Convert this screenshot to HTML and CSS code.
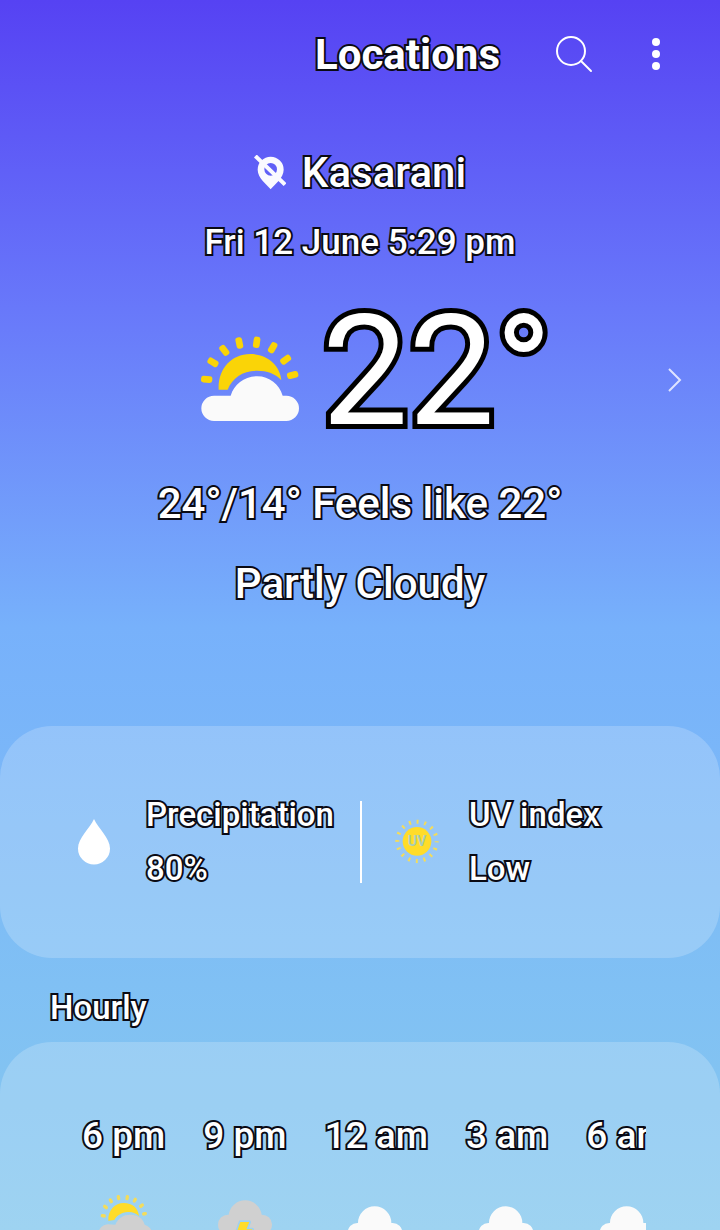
FILE: index.html
```html
<!DOCTYPE html>
<html lang="en">
<head>
  <meta charset="UTF-8">
  <meta name="viewport" content="width=device-width, initial-scale=1">
  <title>Weather</title>
  <link rel="stylesheet" href="styles.css">
</head>
<body>
  <div class="screen">

    <header class="top-bar">
      <h1>Locations</h1>
      <button class="icon-button" aria-label="Search">
        <svg width="40" height="40" viewBox="0 0 40 40" fill="none" stroke="#fff" stroke-width="2" stroke-linecap="round">
          <circle cx="17" cy="17" r="14"/>
          <path d="M27 27L37 37"/>
        </svg>
      </button>
      <button class="icon-button" aria-label="More options">
        <svg width="40" height="40" viewBox="0 0 40 40" fill="#fff">
          <circle cx="20" cy="8" r="4"/>
          <circle cx="20" cy="20" r="4"/>
          <circle cx="20" cy="32" r="4"/>
        </svg>
      </button>
    </header>

    <main>
      <section class="current">
        <h2 class="city">
          <svg width="32" height="36" viewBox="193 41 96 108">
            <path fill="#fafaff" fill-rule="evenodd" d="M243 144C232 130 204 110 204 85a39 39 0 0 1 78 0C282 110 254 130 243 144ZM243 65a19 19 0 1 0 0 38a19 19 0 1 0 0-38Z"/>
            <path fill="none" stroke="#fafaff" stroke-width="12" d="M197 44L286 130"/>
          </svg>
          Kasarani
        </h2>
        <p class="date">Fri 12 June 5:29 pm</p>

        <div class="now">
          <div class="reading">
            <svg width="100" height="88" viewBox="39 137 300 264">
              <g fill="#fad407">
                <rect x="-10" y="-17" width="20" height="34" rx="8" transform="translate(59 267) rotate(-85)"/>
                <rect x="-10" y="-17" width="20" height="34" rx="8" transform="translate(78 216) rotate(-58)"/>
                <rect x="-10" y="-17" width="20" height="34" rx="8" transform="translate(112 180) rotate(-38)"/>
                <rect x="-10" y="-17" width="20" height="34" rx="8" transform="translate(157 158) rotate(-12)"/>
                <rect x="-10" y="-17" width="20" height="34" rx="8" transform="translate(209 156) rotate(8)"/>
                <rect x="-10" y="-17" width="20" height="34" rx="8" transform="translate(257 172) rotate(30)"/>
                <rect x="-10" y="-17" width="20" height="34" rx="8" transform="translate(296 208) rotate(54)"/>
                <rect x="-10" y="-17" width="20" height="34" rx="8" transform="translate(317 254) rotate(76)"/>
                <path d="M95 298C92 240 130 191 190 191C240 191 280 225 283 270C266 250 240 241 210 241C168 241 136 262 122 298Z"/>
              </g>
              <path fill="#fafafa" d="M81 392a38 38 0 0 1 0-76h50C142 282 172 258 211 258C247 258 277 282 287 316h11a38 38 0 0 1 0 76Z"/>
            </svg>
            <span class="temp">22°</span>
          </div>
          <button class="next" aria-label="Next location">
            <svg width="14" height="26" viewBox="0 0 14 26" fill="none" stroke="#dfe4ff" stroke-width="2">
              <path d="M1 2L12 13L1 24"/>
            </svg>
          </button>
        </div>

        <p class="summary">24°/14° Feels like 22°</p>
        <p class="summary">Partly Cloudy</p>
      </section>

      <section class="card details">
        <div class="detail">
          <svg width="44" height="46" viewBox="0 0 44 46">
            <path fill="#fff" d="M22 0C26 9 38 19 38 29.500a16 16 0 0 1-32 0C6 19 18 9 22 0Z"/>
          </svg>
          <dl>
            <dt>Precipitation</dt>
            <dd>80%</dd>
          </dl>
        </div>
        <div class="detail">
          <svg width="44" height="46" viewBox="0 0 132 138">
            <circle cx="66" cy="67" r="59" fill="none" stroke="#f3dc5c" stroke-width="12" stroke-dasharray="6 17.170" stroke-dashoffset="3"/>
            <circle cx="66" cy="67" r="43" fill="#ffdc29"/>
            <text class="uv" x="66" y="82" text-anchor="middle">UV</text>
          </svg>
          <dl>
            <dt>UV index</dt>
            <dd>Low</dd>
          </dl>
        </div>
      </section>

      <h2 class="section-title">Hourly</h2>

      <section class="card hourly">
        <ul class="hours">
          <li>
            <span>6 pm</span>
            <svg width="56" height="56" viewBox="72 276 168 168">
              <g fill="none" stroke="#f3dc5c" stroke-width="10" stroke-linecap="round">
                <path d="M91 347L97 348M98 319L103 323M115 300L118 305M139 290L140 296M166 290L165 296M190 298L187 303M211 315L206 319M220 341L215 342"/>
              </g>
              <path fill="#ffdc29" d="M109 362C107 330 130 309 155 309C181 309 199 325 201 348C190 338 179 335 168 336C148 338 135 346 127 360Z"/>
              <path fill="#d0d0d0" d="M108 430a28 28 0 0 1 0-57q12 0 22 1C139 353 155 344 175 344C198 344 213 355 218 374C234 379 240 390 240 402a28 28 0 0 1-28 28Z"/>
            </svg>
          </li>
          <li>
            <span>9 pm</span>
            <svg width="56" height="56" viewBox="444 276 168 168">
              <path fill="#d0d0d0" d="M477 404a30 30 0 0 1 0-60h2a50 50 0 0 1 99 0a30 30 0 0 1 2 60Z"/>
              <path fill="#ffdc29" stroke="#9dd1f2" stroke-width="10" paint-order="stroke" d="M514 366H541L532 388H550L512 438L520 406H500Z"/>
            </svg>
          </li>
          <li>
            <span>12 am</span>
            <svg width="56" height="56" viewBox="360 273 168 168">
              <path fill="#fafafa" d="M388 424a29 29 0 0 1 0-58h2a50 50 0 0 1 100 0h4a29 29 0 0 1 0 58Z"/>
            </svg>
          </li>
          <li>
            <span>3 am</span>
            <svg width="56" height="56" viewBox="360 273 168 168">
              <path fill="#fafafa" d="M388 424a29 29 0 0 1 0-58h2a50 50 0 0 1 100 0h4a29 29 0 0 1 0 58Z"/>
            </svg>
          </li>
          <li>
            <span>6 am</span>
            <svg width="56" height="56" viewBox="360 273 168 168">
              <path fill="#fafafa" d="M388 424a29 29 0 0 1 0-58h2a50 50 0 0 1 100 0h4a29 29 0 0 1 0 58Z"/>
            </svg>
          </li>
        </ul>
      </section>
    </main>

  </div>
</body>
</html>
```

FILE: styles.css
```css
* {
  box-sizing: border-box;
}

body {
  margin: 0;
  font-family: Roboto, sans-serif;
  font-weight: 500;
  color: #ffffff;
}

h1, h2, p, dl, dd, ul {
  margin: 0;
  padding: 0;
  font-weight: 500;
}

svg {
  display: block;
  flex-shrink: 0;
}

button {
  background: none;
  border: none;
  padding: 0;
  cursor: pointer;
}

/* dark outline round all text */
h1, h2, p, dl, .temp, .hours {
  -webkit-text-stroke: 4px #0a0a14;
  paint-order: stroke fill;
  stroke-linejoin: round;
}

.screen {
  height: 100vh;
  overflow: hidden;
  background: linear-gradient(#5642f3 0%, #6878fa 25%, #77b1fb 51%, #80c0f4 80%, #86c8ee 100%);
}

.top-bar {
  display: flex;
  align-items: center;
  justify-content: flex-end;
  height: 108px;
  padding: 0 44px;
  gap: 42px;
}

.top-bar h1 {
  font-size: 42px;
  font-weight: 700;
  margin-right: 12px;
}

.current {
  text-align: center;
  padding-top: 37px;
}

.city {
  display: flex;
  align-items: center;
  justify-content: center;
  gap: 16px;
  font-size: 42px;
  line-height: 56px;
}

.date {
  font-size: 35px;
  line-height: 44px;
  margin-top: 20px;
}

.now {
  display: grid;
  grid-template-columns: 1fr auto 1fr;
  align-items: center;
  height: 200px;
  padding: 0 38px;
  margin-top: 15px;
}

.reading {
  grid-column: 2;
  display: flex;
  align-items: center;
  gap: 22px;
  padding-left: 32px;
}

/* sits a little higher than the icon beside it */
.temp {
  font-size: 154px;
  font-weight: 400;
  line-height: 184px;
  padding-bottom: 16px;
  -webkit-text-stroke: 10px #000000;
}

.next {
  justify-self: end;
}

.summary {
  font-size: 42px;
  line-height: 48px;
}

.summary + .summary {
  margin-top: 32px;
}

.card {
  background: rgba(255, 255, 255, 0.2);
  border-radius: 52px;
}

.details {
  display: grid;
  grid-template-columns: 1fr 1fr;
  padding: 75px 36px;
  margin-top: 118px;
}

.detail {
  display: flex;
  align-items: center;
  gap: 30px;
  padding-left: 36px;
}

.detail + .detail {
  padding-left: 33px;
  border-left: 2px solid #ffffff;
}

.detail dl {
  font-size: 33px;
  line-height: 28px;
}

.detail dd {
  margin-top: 26px;
}

.uv {
  font-size: 42px;
  font-weight: 700;
  fill: #a8cdb8;
}

.section-title {
  font-size: 33px;
  line-height: 68px;
  padding: 16px 50px 0;
}

.hourly {
  height: 320px;
  padding: 72px 74px;
}

.hours {
  display: flex;
  gap: 38px;
  overflow: hidden;
  list-style: none;
  padding-left: 8px;
  font-size: 37px;
  line-height: 44px;
  white-space: nowrap;
}

.hours li {
  display: flex;
  flex-direction: column;
  align-items: center;
  flex-shrink: 0;
  gap: 34px;
}
```
